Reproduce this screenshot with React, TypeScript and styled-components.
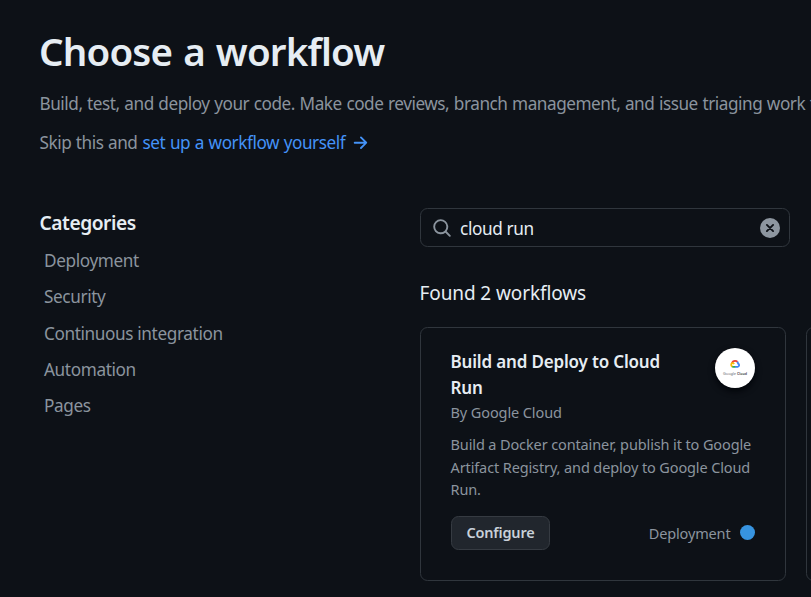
import React from 'react';
import styled, { createGlobalStyle } from 'styled-components';

const color = {
  bg: '#0d1117',
  text: '#e6edf3',
  muted: '#8b949e',
  link: '#4493f8',
  border: '#30363d',
  button: '#21262d',
};

const GlobalStyle = createGlobalStyle`
  *, *::before, *::after { box-sizing: border-box; }
  html, body {
    margin: 0;
    height: 100%;
    overflow: hidden;
    background: ${color.bg};
  }
  body {
    color: ${color.text};
    font-family: "Noto Sans", sans-serif;
  }
  h1, h2, h3, p, ul { margin: 0; padding: 0; }
`;

const Page = styled.div`
  height: 597px;
  padding: 27px 0 0 40px;
  overflow: hidden;
`;

const Title = styled.h1`
  margin-left: -1px;
  font-size: 38.5px;
  line-height: 48px;
  font-weight: 600;
  letter-spacing: -0.83px;
  word-spacing: 1.8px;
`;

const Lead = styled.p<{ $gap: number }>`
  margin-top: ${({ $gap }) => $gap}px;
  margin-left: -0.5px;
  color: ${color.muted};
  font-size: 17.2px;
  line-height: 28px;
  letter-spacing: -0.47px;
  word-spacing: 0.6px;
  white-space: nowrap;
`;

const SetupLink = styled.a`
  margin-left: 0.5px;
  color: ${color.link};
  text-decoration: none;
  letter-spacing: -0.46px;

  svg {
    margin-left: 4.5px;
    vertical-align: -4px;
  }
`;

const Main = styled.main`
  display: grid;
  grid-template-columns: 380px 752px;
  margin-top: 51px;
`;

const CategoryHeading = styled.h2`
  margin-left: -0.5px;
  font-size: 19.2px;
  line-height: 29px;
  font-weight: 600;
  letter-spacing: -0.46px;
`;

const CategoryList = styled.ul`
  margin-top: 6px;
  padding-left: 4px;
  list-style: none;
`;

const CategoryItem = styled.li`
  color: ${color.muted};
  font-size: 17.2px;
  line-height: 36.25px;
  letter-spacing: -0.38px;
`;

const SearchBox = styled.label`
  display: flex;
  align-items: center;
  width: 370px;
  height: 39px;
  padding: 0 9px 0 11px;
  border: 1px solid ${color.border};
  border-radius: 7.5px;
`;

const SearchInput = styled.input`
  flex: 1;
  min-width: 0;
  height: 37px;
  margin-left: 8px;
  padding: 1px 0 0;
  border: 0;
  outline: 0;
  background: transparent;
  color: ${color.text};
  font-family: inherit;
  font-size: 17.2px;
  letter-spacing: -0.36px;
`;

const ResultHeading = styled.h2`
  margin-top: 32px;
  margin-left: -0.5px;
  font-size: 19px;
  line-height: 28px;
  font-weight: 400;
  letter-spacing: -0.1px;
`;

const CardGrid = styled.div`
  display: grid;
  grid-template-columns: 366px 366px;
  gap: 20px;
  margin-top: 20px;
`;

const Card = styled.article`
  display: flex;
  flex-direction: column;
  height: 254px;
  padding: 20px 30px 30px;
  border: 1px solid ${color.border};
  border-radius: 7.5px;
`;

const CardHeader = styled.div`
  display: flex;
  justify-content: space-between;
`;

const CardTitle = styled.h3`
  width: 225px;
  margin-left: -0.5px;
  padding-top: 1px;
  font-size: 17px;
  line-height: 26px;
  font-weight: 600;
  letter-spacing: -0.17px;
`;

const Logo = styled.div`
  width: 40px;
  height: 40px;
  border-radius: 50%;
  background: #fff;
  box-shadow: 0 3px 6px #010409;

  svg { display: block; }
`;

const Creator = styled.p`
  margin-left: -0.5px;
  color: ${color.muted};
  font-size: 14.5px;
  line-height: 23px;
  letter-spacing: -0.1px;
`;

const Description = styled.p`
  margin-top: 9px;
  margin-left: -0.5px;
  color: ${color.muted};
  font-size: 14.5px;
  line-height: 22.5px;
  letter-spacing: -0.12px;
  white-space: nowrap;
`;

const CardFooter = styled.div`
  display: flex;
  align-items: center;
  justify-content: space-between;
  margin-top: auto;
`;

const Button = styled.button`
  width: 99px;
  height: 34px;
  padding: 0 0 2px;
  border: 1px solid #363b42;
  border-radius: 7.5px;
  background: ${color.button};
  color: #c9d1d9;
  font-family: inherit;
  font-size: 14.5px;
  font-weight: 600;
  letter-spacing: -0.18px;
`;

const Tag = styled.span`
  display: flex;
  align-items: center;
  gap: 9.5px;
  color: ${color.muted};
  font-size: 14.5px;
  letter-spacing: -0.15px;
`;

const Dot = styled.i`
  width: 15px;
  height: 15px;
  margin-bottom: 2px;
  border-radius: 50%;
  background: #3794e0;
`;

const categories = ['Deployment', 'Security', 'Continuous integration', 'Automation', 'Pages'];

const ArrowIcon = () => (
  <svg width="20" height="20" viewBox="0 0 16 16" fill={color.link} aria-hidden="true">
    <path d="M8.22 2.97a.75.75 0 0 1 1.06 0l4.25 4.25a.75.75 0 0 1 0 1.06l-4.25 4.25a.751.751 0 0 1-1.042-.018.751.751 0 0 1-.018-1.042l2.97-2.97H3.75a.75.75 0 0 1 0-1.5h7.44L8.22 4.03a.75.75 0 0 1 0-1.06Z" />
  </svg>
);

const SearchIcon = () => (
  <svg width="20" height="20" viewBox="0 0 16 16" fill={color.muted} aria-hidden="true">
    <path d="M10.68 11.74a6 6 0 0 1-7.922-8.982 6 6 0 0 1 8.982 7.922l3.04 3.04a.749.749 0 0 1-.326 1.275.749.749 0 0 1-.734-.215ZM11.5 7a4.499 4.499 0 1 0-8.997 0A4.499 4.499 0 0 0 11.5 7Z" />
  </svg>
);

const ClearIcon = () => (
  <svg width="20" height="20" viewBox="0 0 20 20" aria-hidden="true">
    <circle cx="10" cy="10" r="10" fill="#8d96a0" />
    <path d="M6.9 6.9l6.2 6.2M13.1 6.9l-6.2 6.2" stroke={color.bg} strokeWidth="1.9" strokeLinecap="round" />
  </svg>
);

const GoogleCloudLogo = () => (
  <svg width="40" height="40" viewBox="0 0 40 40" aria-label="Google Cloud">
    <g fill="none" strokeWidth="1.8">
      <path d="M17 15.2C17.4 13.6 18.6 12.8 20 12.8C21.1 12.8 21.9 13.2 22.5 13.9" stroke="#ea4335" />
      <path d="M22.4 13.8C22.9 14.5 23.1 15 23.1 15.7A1.6 1.6 0 0 1 22.6 18.8H20" stroke="#4285f4" />
      <path d="M20.2 18.8H18.2C17.7 18.8 17.3 18.6 17 18.3" stroke="#34a853" />
      <path d="M17.2 18.5A1.9 1.9 0 0 1 17.2 15.1C18 14.9 18.7 15.3 19.1 16" stroke="#fbbc05" />
    </g>
    <text x="8" y="26.8" fontSize="4.2" fill="#5f6368" textLength="13" lengthAdjust="spacingAndGlyphs">Google</text>
    <text x="22" y="26.8" fontSize="4.2" fill="#3c4043" textLength="10" lengthAdjust="spacingAndGlyphs" fontWeight="600">Cloud</text>
  </svg>
);

export default function App() {
  return (
    <>
      <GlobalStyle />
      <Page>
        <Title>Choose a workflow</Title>
        <Lead $gap={15}>
          Build, test, and deploy your code. Make code reviews, branch management, and issue triaging work the way you want.
        </Lead>
        <Lead $gap={11}>
          Skip this and <SetupLink href="#">set up a workflow yourself<ArrowIcon /></SetupLink>
        </Lead>
        <Main>
          <nav>
            <CategoryHeading>Categories</CategoryHeading>
            <CategoryList>
              {categories.map((name) => (
                <CategoryItem key={name}>{name}</CategoryItem>
              ))}
            </CategoryList>
          </nav>
          <section>
            <SearchBox>
              <SearchIcon />
              <SearchInput defaultValue="cloud run" spellCheck={false} />
              <ClearIcon />
            </SearchBox>
            <ResultHeading>Found 2 workflows</ResultHeading>
            <CardGrid>
              <Card>
                <CardHeader>
                  <CardTitle>Build and Deploy to Cloud Run</CardTitle>
                  <Logo><GoogleCloudLogo /></Logo>
                </CardHeader>
                <Creator>By Google Cloud</Creator>
                <Description>
                  Build a Docker container, publish it to Google<br />
                  Artifact Registry, and deploy to Google Cloud<br />
                  Run.
                </Description>
                <CardFooter>
                  <Button type="button">Configure</Button>
                  <Tag>Deployment<Dot /></Tag>
                </CardFooter>
              </Card>
              <Card />
            </CardGrid>
          </section>
        </Main>
      </Page>
    </>
  );
}
